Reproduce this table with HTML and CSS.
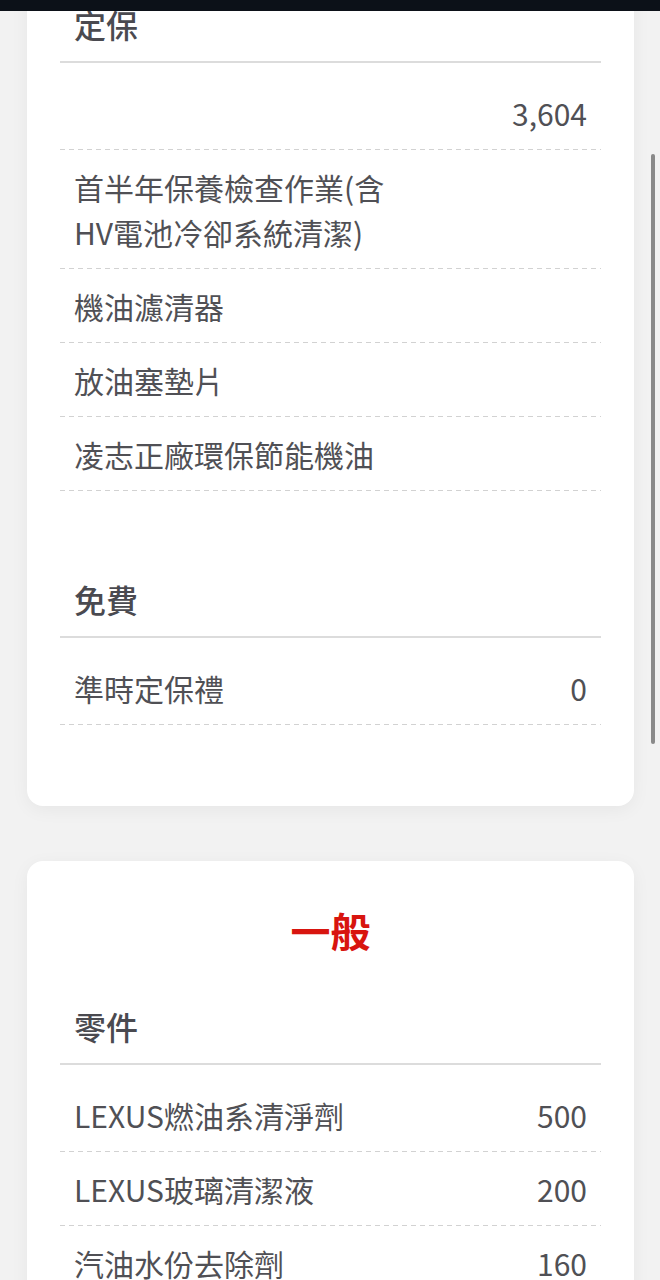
FILE: index.html
```html
<!DOCTYPE html>
<html lang="zh-Hant">
<head>
<meta charset="UTF-8">
<meta name="viewport" content="width=device-width, initial-scale=1.0">
<title>保養項目</title>
<link rel="stylesheet" href="styles.css">
</head>
<body>

<!-- top bar -->
<div class="topbar"></div>
<div class="scroll-thumb"></div>

<div class="page">

    <!-- 定保 card -->
    <div class="card">
        <div class="section">
            <div class="section-head">定保</div>
            <ul class="items">
                <li><span class="name"></span><span class="price">3,604</span></li>
                <li><span class="name">首半年保養檢查作業(含<br>HV電池冷卻系統清潔)</span><span class="price"></span></li>
                <li><span class="name">機油濾清器</span><span class="price"></span></li>
                <li><span class="name">放油塞墊片</span><span class="price"></span></li>
                <li><span class="name">凌志正廠環保節能機油</span><span class="price"></span></li>
            </ul>
        </div>
        <div class="section">
            <div class="section-head">免費</div>
            <ul class="items">
                <li><span class="name">準時定保禮</span><span class="price">0</span></li>
            </ul>
        </div>
    </div>

    <!-- 一般 card -->
    <div class="card">
        <h2 class="card-title">一般</h2>
        <div class="section">
            <div class="section-head">零件</div>
            <ul class="items">
                <li><span class="name">LEXUS燃油系清淨劑</span><span class="price">500</span></li>
                <li><span class="name">LEXUS玻璃清潔液</span><span class="price">200</span></li>
                <li><span class="name">汽油水份去除劑</span><span class="price">160</span></li>
            </ul>
        </div>
    </div>

</div>

</body>
</html>
```

FILE: styles.css
```css
body {
    margin: 0;
    padding: 0;
    background-color: #f2f2f2;
    color: #505055;
    font-family: 'Noto Sans CJK TC', 'Noto Sans', sans-serif;
    overflow: hidden;
}

.topbar {
    position: fixed;
    top: 0;
    left: 0;
    right: 0;
    height: 11px;
    background: #0c1118;
    z-index: 10;
}

.scroll-thumb {
    position: fixed;
    top: 154px;
    right: 5px;
    width: 4px;
    height: 590px;
    border-radius: 2px;
    background: #8a8a8a;
    z-index: 10;
}

.page {
    margin-top: -69px;
    padding: 0 26px 0 27px;
}

.card {
    background: #fff;
    border-radius: 16px;
    padding: 33px;
    margin-bottom: 55px;
    box-shadow: 0 4px 18px rgba(0, 0, 0, 0.05);
}

.card-title {
    margin: 6px 0;
    text-align: center;
    color: #d8150f;
    font-size: 40px;
    font-weight: 700;
    line-height: 60px;
}

.section {
    margin-bottom: 48px;
}

.section-head {
    padding: 38px 14px 14px;
    font-size: 32px;
    font-weight: 500;
    line-height: 45px;
    color: #4a4a50;
    border-bottom: 2px solid #dcdcdc;
}

.items {
    list-style: none;
    margin: 13px 0 0;
    padding: 0;
}

.items li {
    display: flex;
    justify-content: space-between;
    align-items: center;
    padding: 14.5px 14px;
    font-size: 30px;
    line-height: 45px;
    background-image: repeating-linear-gradient(to right, #d2d2d2 0 5px, transparent 5px 9px);
    background-size: 100% 1px;
    background-repeat: no-repeat;
    background-position: left bottom;
}

.items li .price {
    margin-left: 20px;
    white-space: nowrap;
}
```
